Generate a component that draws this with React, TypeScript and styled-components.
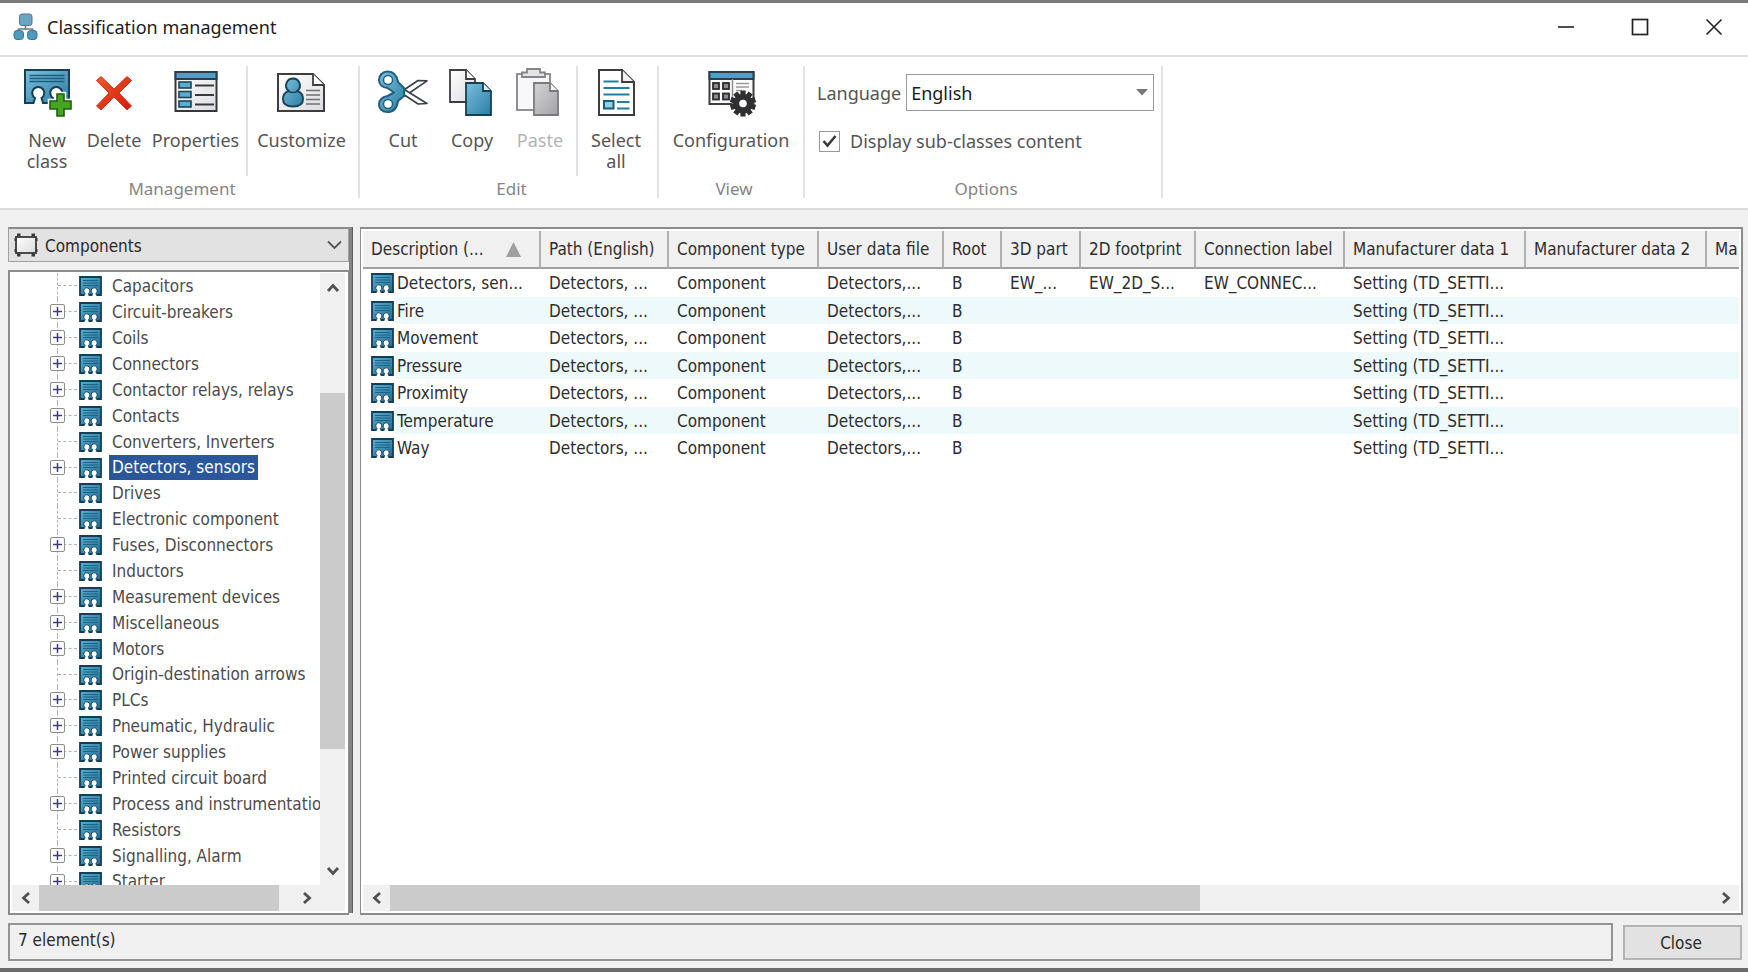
import React from "react";
import styled, { createGlobalStyle } from "styled-components";

const uiFont = `"Noto Sans", "Open Sans", sans-serif`;
const listFont = `"DejaVu Sans Condensed", "Noto Sans", sans-serif`;

const GlobalStyle = createGlobalStyle`
  * { box-sizing: border-box; }
  body { margin: 0; background: #f0f0f0; font-family: ${uiFont}; }
  button, select, input { font: inherit; color: inherit; }
  ul { list-style: none; margin: 0; padding: 0; }
`;

/* ---------- window frame ---------- */

const Window = styled.div`
  display: flex;
  flex-direction: column;
  height: 100vh;
  border-top: 3px solid #7a7a7a;
  border-bottom: 4px solid #6c6c6c;
  background: #f0f0f0;
`;

const TitleBar = styled.header`
  display: flex;
  align-items: center;
  flex: none;
  height: 54px;
  padding: 0 0 5px 13px;
  background: #fff;
  border-bottom: 2px solid #dfdfe1;
`;

const Title = styled.h1`
  flex: 1;
  margin: 0 0 0 9px;
  font-size: 18px;
  line-height: 24px;
  font-weight: 400;
  color: #1c1c1c;
`;

const WindowButtons = styled.div`
  display: flex;
  gap: 6px;
`;

const WindowButton = styled.button`
  display: flex;
  align-items: center;
  justify-content: center;
  width: 68px;
  height: 40px;
  padding: 0;
  border: 0;
  background: none;
`;

/* ---------- ribbon ---------- */

const Ribbon = styled.nav`
  display: flex;
  flex: none;
  height: 153px;
  padding-top: 9px;
  background: #fff;
  border-bottom: 2px solid #dadada;
`;

const Group = styled.section`
  display: flex;
  flex-direction: column;
  height: 132px;
  border-right: 2px solid #e3e1e5;
`;

const GroupBody = styled.div<{ $left: number }>`
  display: flex;
  flex: none;
  height: 110px;
  padding: 0 8px 0 ${(p) => p.$left}px;
`;

const GroupLabel = styled.div`
  flex: none;
  margin-top: 4px;
  padding-left: 6px;
  text-align: center;
  font-size: 17px;
  line-height: 18px;
  color: #858585;
`;

const ToolButton = styled.button<{ $width: number }>`
  display: flex;
  flex-direction: column;
  align-items: center;
  width: ${(p) => p.$width}px;
  padding: 0;
  border: 0;
  background: none;
  font-size: 18px;
  line-height: 21px;
  color: #555;
  &:disabled { color: #b4b4b4; }
  svg { flex: none; margin-bottom: 12px; }
`;

const Divider = styled.span`
  width: 2px;
  margin: 0 5px;
  background: #e3e1e5;
`;

const Options = styled.div`
  display: flex;
  flex-direction: column;
  flex: none;
  gap: 17px;
  height: 110px;
  padding: 8px 7px 0 12px;
  font-size: 18px;
  color: #555;
`;

const OptionLine = styled.div`
  display: flex;
  align-items: center;
  line-height: 26px;
`;

const SelectBox = styled.div<{ $wide?: boolean }>`
  position: relative;
  flex: ${(p) => (p.$wide ? "none" : "0 0 248px")};
  margin-left: ${(p) => (p.$wide ? 0 : 5)}px;
`;

const LanguageSelect = styled.select`
  display: block;
  appearance: none;
  width: 100%;
  height: 37px;
  padding: 0 30px 0 4px;
  border: 1px solid #9a9a9a;
  border-radius: 0;
  background: #fff;
  color: #1c1c1c;
`;

const ClassSelect = styled.select`
  display: block;
  appearance: none;
  width: 100%;
  height: 35px;
  padding: 1px 30px 0 36px;
  border: 1px solid #a0a0a0;
  border-top: 2px solid #8c8c8c;
  border-radius: 0;
  background: #e2e2e2;
  font-family: ${listFont};
  font-size: 17px;
  color: #2a2a2a;
`;

const Overlay = styled.span<{ $side: "left" | "right"; $inset: number }>`
  position: absolute;
  top: 0;
  bottom: 0;
  ${(p) => p.$side}: ${(p) => p.$inset}px;
  display: flex;
  align-items: center;
  pointer-events: none;
`;

const CheckLabel = styled.label`
  margin-left: 10px;
`;

const CheckFrame = styled.span`
  position: relative;
  display: flex;
  margin-left: 2px;
`;

const Checkbox = styled.input`
  appearance: none;
  width: 21px;
  height: 21px;
  margin: 0;
  border: 1px solid #9a9a9a;
  background: #fff;
  & + span { visibility: hidden; }
  &:checked + span { visibility: visible; }
`;

/* ---------- work area ---------- */

const Work = styled.main`
  display: flex;
  flex: 1;
  min-height: 0;
  padding: 17px 5px 8px 8px;
  font-family: ${listFont};
  font-size: 17px;
`;

const Side = styled.aside`
  display: flex;
  flex-direction: column;
  gap: 8px;
  flex: 0 0 341px;
  min-width: 0;
`;

const Splitter = styled.div`
  flex: 0 0 4px;
  margin: 0 7px 2px 0;
  background: #848484;
  border-right: 1px solid #5f5f5f;
`;

const TreePanel = styled.div`
  display: grid;
  grid-template-columns: minmax(0, 1fr) 25px;
  grid-template-rows: minmax(0, 1fr) 26px;
  flex: 1;
  min-height: 0;
  padding: 1px 3px 2px 2px;
  background: #fff;
  border: 2px solid #8c8c8c;
  border-width: 2px 1px 2px 2px;
`;

const Tree = styled.ul`
  overflow: hidden;
  min-height: 0;
  color: #4c4c4c;
`;

const TreeItem = styled.li`
  display: flex;
  align-items: center;
  height: 26px;
  white-space: nowrap;
  &:nth-child(8n) { height: 25px; }
`;

const Branch = styled.span`
  position: relative;
  flex: none;
  align-self: stretch;
  width: 22px;
  margin-left: 45px;
  border-left: 1px dashed #b4b4b4;
  &::after {
    content: "";
    position: absolute;
    left: 0;
    right: 2px;
    top: 12px;
    border-top: 1px dashed #b4b4b4;
  }
`;

const Expander = styled.button`
  position: absolute;
  z-index: 1;
  left: -8px;
  top: 5px;
  display: flex;
  align-items: center;
  justify-content: center;
  width: 15px;
  height: 15px;
  padding: 0;
  border: 1px solid #8e8e8e;
  border-radius: 2px;
  background: #fff;
`;

const TreeLabel = styled.span<{ $selected?: boolean }>`
  margin-left: 7px;
  padding: 0 3px;
  line-height: 25px;
  color: ${(p) => (p.$selected ? "#fff" : "inherit")};
  background: ${(p) => (p.$selected ? "#2a569b" : "none")};
`;

const VBar = styled.div`
  display: flex;
  flex-direction: column;
  background: #f0f0f0;
`;

const VTrack = styled.div`
  display: grid;
  flex: 1;
  grid-template-rows: 91fr 356fr 107fr;
`;

const HBar = styled.div`
  display: flex;
  flex: none;
  height: 26px;
  background: #f0f0f0;
`;

const HTrack = styled.div<{ $cols: string }>`
  display: grid;
  flex: 1;
  grid-template-columns: ${(p) => p.$cols};
`;

const Thumb = styled.div`
  background: #cbcbcb;
`;

const ArrowButton = styled.button<{ $vertical?: boolean }>`
  display: flex;
  align-items: center;
  justify-content: center;
  flex: 0 0 ${(p) => (p.$vertical ? 29 : 27)}px;
  padding: 0;
  border: 0;
  background: none;
`;

const Corner = styled.div`
  background: #f0f0f0;
`;

/* ---------- table ---------- */

const ListPanel = styled.section`
  display: flex;
  flex-direction: column;
  flex: 1;
  min-width: 0;
  padding: 2px;
  background: #fff;
  border: 2px solid #8c8c8c;
  border-width: 2px 2px 2px 1px;
`;

const TableClip = styled.div`
  flex: 1;
  min-height: 0;
  overflow: hidden;
`;

const Table = styled.table`
  table-layout: fixed;
  width: 1500px;
  border-collapse: separate;
  border-spacing: 0;
  color: #2e2e2e;
`;

const Th = styled.th`
  height: 38px;
  padding: 0 8px;
  border-right: 2px solid #b0b0b0;
  border-bottom: 2px solid #a0a0a0;
  background: #f0f0f0;
  font-weight: 400;
  text-align: left;
  white-space: nowrap;
`;

const Sorted = styled.span`
  display: flex;
  align-items: center;
  justify-content: space-between;
  padding-right: 10px;
`;

const Row = styled.tr`
  height: 27px;
  &:nth-child(odd) { height: 28px; }
  &:nth-child(even) td { background: #edf9fa; }
  &:nth-child(even) td:first-child {
    background: linear-gradient(to right, #fff 32px, #edf9fa 32px);
  }
`;

const Td = styled.td`
  padding: 0 0 0 8px;
  overflow: hidden;
  white-space: nowrap;
`;

const NameCell = styled.span`
  display: flex;
  align-items: center;
  gap: 3px;
`;

/* ---------- footer ---------- */

const Footer = styled.footer`
  display: flex;
  align-items: center;
  flex: none;
  gap: 10px;
  padding: 0 6px 7px 8px;
  font-family: ${listFont};
  font-size: 17px;
  color: #2a2a2a;
`;

const Status = styled.output`
  flex: 1;
  height: 38px;
  padding: 0 8px;
  border: 2px solid #949494;
  line-height: 31px;
`;

const CloseButton = styled.button`
  width: 119px;
  height: 35px;
  padding: 1px 3px 0 0;
  border: 2px solid #b4b4b4;
  background: #e2e2e2;
`;

/* ---------- drawings ---------- */

const GradientSheet = styled.svg`
  position: absolute;
`;

const Gradients = () => (
  <GradientSheet width="0" height="0" aria-hidden="true">
    <defs>
      <linearGradient id="blue" x1="0" y1="0" x2="1" y2="1">
        <stop offset="0" stopColor="#7cc0de" />
        <stop offset="1" stopColor="#2b7da3" />
      </linearGradient>
      <linearGradient id="deep" x1="0" y1="0" x2="1" y2="1">
        <stop offset="0" stopColor="#58b0d4" />
        <stop offset="1" stopColor="#1d6c90" />
      </linearGradient>
      <linearGradient id="paper" x1="0" y1="0" x2="1" y2="1">
        <stop offset="0" stopColor="#ffffff" />
        <stop offset="1" stopColor="#dcdce0" />
      </linearGradient>
      <linearGradient id="grey" x1="0" y1="0" x2="1" y2="1">
        <stop offset="0" stopColor="#d4d3d6" />
        <stop offset="1" stopColor="#a3a2a6" />
      </linearGradient>
      <linearGradient id="red" x1="0" y1="0" x2="1" y2="1">
        <stop offset="0" stopColor="#ee5a2a" />
        <stop offset="1" stopColor="#cf1a0c" />
      </linearGradient>
    </defs>
  </GradientSheet>
);

const ClassGlyph = styled.svg`
  flex: none;
`;

const ClassIcon = () => (
  <ClassGlyph width="23" height="20" viewBox="0 0 23 20" aria-hidden="true">
    <rect x="1" y="1" width="21" height="18" fill="url(#deep)" />
    <path d="M4 4.500h15M4 7h15M4 9.500h15" stroke="#1f6384" strokeWidth="1" />
    <path d="M5.500 19H1V1H22V19H17.500M9.500 19h4" fill="none" stroke="#123f55" strokeWidth="1.800" />
    <path
      d="M5 20L6.200 17.400A3 3 0 1 1 9.400 17.400L10.200 20M12.800 20L13.600 17.400A3 3 0 1 1 16.800 17.400L18 20"
      fill="#fff"
      stroke="#123f55"
      strokeWidth=".9"
    />
  </ClassGlyph>
);

const AppIcon = () => (
  <svg width="25" height="28" viewBox="0 0 25 28" aria-hidden="true">
    <path d="M12.500 12v5M5.500 19v-3h14v3" fill="none" stroke="#6d7c86" strokeWidth="1.600" />
    <rect x="6.500" y="1" width="12.500" height="11.500" rx="2.500" fill="#6aa5c2" stroke="#557688" />
    <rect x="1" y="17.500" width="9.500" height="9" rx="3" fill="#4d9bc0" stroke="#40708a" />
    <rect x="14.500" y="17.500" width="9.500" height="9" rx="3" fill="#4d9bc0" stroke="#40708a" />
  </svg>
);

const NewClassIcon = () => (
  <svg width="50" height="52" viewBox="0 0 50 52" aria-hidden="true">
    <path
      d="M3 4H47V37H39L37.500 32A6 6 0 1 0 31 32L29.500 37H21L19.500 32A6 6 0 1 0 13 32L11.500 37H3Z"
      fill="url(#blue)"
      stroke="#173f52"
      strokeWidth="2"
    />
    <path d="M7.500 9.500h35M7.500 12.500h35M7.500 15.500h35" stroke="#1c5c7c" strokeWidth="1.300" />
    <path d="M35 28h7v7h7v8h-7v7h-7v-7h-7v-8h7z" fill="none" stroke="#fff" strokeWidth="4.500" />
    <path d="M35 28h7v7h7v8h-7v7h-7v-7h-7v-8h7z" fill="#46a51e" stroke="#1f5f12" strokeWidth="1.600" />
  </svg>
);

const DeleteIcon = () => (
  <svg width="50" height="52" viewBox="0 0 50 52" aria-hidden="true">
    <path
      d="M12 10.500l13 12.500 13-12.500 4.500 4L30 27l12.500 13-4.500 4-13-13-13 13-4.500-4L20 27 7.500 14.500z"
      fill="url(#red)"
      stroke="#d8341a"
      strokeWidth="1"
      strokeLinejoin="round"
    />
  </svg>
);

const PropertiesIcon = () => (
  <svg width="50" height="52" viewBox="0 0 50 52" aria-hidden="true">
    <rect x="4.500" y="6" width="41" height="39" fill="url(#paper)" stroke="#33393d" strokeWidth="2" />
    <rect x="4.500" y="6" width="41" height="7" fill="#4d9fc5" stroke="#26404d" strokeWidth="2" />
    <g fill="#5aadd0" stroke="#1c4557" strokeWidth="1.600">
      <rect x="8" y="16" width="12" height="6" />
      <rect x="8" y="25.500" width="12" height="6" />
      <rect x="8" y="35" width="12" height="6" />
    </g>
    <path d="M24 19.500h19M24 29h19M24 38.500h19" stroke="#3a3a3a" strokeWidth="1.800" />
  </svg>
);

const CustomizeIcon = () => (
  <svg width="52" height="52" viewBox="0 0 52 52" aria-hidden="true">
    <path d="M2 8h35l11 11v26H2z" fill="url(#paper)" stroke="#3d3d3f" strokeWidth="2" />
    <path d="M37 8v11h11" fill="#fff" stroke="#3d3d3f" strokeWidth="1.800" />
    <path
      d="M17 12.500a7 7 0 0 1 4.500 12.300c3.500 1.500 5.500 4.500 5.500 8.200 0 5-4 7.500-10 7.500s-10-2.500-10-7.500c0-3.700 2-6.700 5.500-8.200A7 7 0 0 1 17 12.500z"
      fill="url(#blue)"
      stroke="#1c4557"
      strokeWidth="2"
    />
    <path d="M12.500 25.500q4.500 2 9 0" fill="none" stroke="#1c4557" strokeWidth="1.600" />
    <path d="M30 24.500h14M30 29h14M30 33.500h14M30 38h14" stroke="#707074" strokeWidth="1.600" />
  </svg>
);

const CutIcon = () => (
  <svg width="52" height="52" viewBox="0 0 52 52" aria-hidden="true">
    <g stroke="#3a4045" strokeWidth="1.600" strokeLinejoin="round">
      <path d="M26 24.500L41 14.500l9 .3L28 30z" fill="#fff" />
      <path d="M26 28l15 10 9-.5L28 24z" fill="#fff" />
    </g>
    <g fill="url(#blue)" stroke="#20607f" strokeWidth="2" strokeLinejoin="round">
      <path d="M10.500 5.500c6 0 9.500 4 10.500 10.500l6 6v8l-6 5c-1 7-4.500 11-10.500 11-5 0-8.500-3-8.500-7.500C2 34 5.500 31 10.500 30l6.500-3.500L10.500 22C5.500 21.500 2 18.500 2 14c0-4.500 3.500-8.500 8.500-8.500z" />
    </g>
    <circle cx="11" cy="14" r="4.500" fill="#fff" stroke="#20607f" strokeWidth="1.500" />
    <circle cx="11" cy="38" r="4.500" fill="#fff" stroke="#20607f" strokeWidth="1.500" />
  </svg>
);

const CopyIcon = () => (
  <svg width="50" height="52" viewBox="0 0 50 52" aria-hidden="true">
    <path d="M3 4h16l9 9v23H3z" fill="url(#paper)" stroke="#3d3d3f" strokeWidth="1.800" />
    <path d="M19 4v9h9" fill="#fff" stroke="#3d3d3f" strokeWidth="1.800" />
    <path d="M19 17h17l8 8v24H19z" fill="url(#blue)" stroke="#173f52" strokeWidth="1.800" />
    <path d="M36 17v8h8" fill="#d9eef7" stroke="#173f52" strokeWidth="1.800" />
  </svg>
);

const PasteIcon = () => (
  <svg width="50" height="52" viewBox="0 0 50 52" aria-hidden="true">
    <rect x="2" y="8" width="33" height="36" fill="#f8f8fa" stroke="#858588" strokeWidth="1.800" />
    <path d="M7 11V6.500h5V3h13v3.500h5V11z" fill="#e4e3e6" stroke="#858588" strokeWidth="1.800" />
    <path d="M19 17h16l8 8v24H19z" fill="url(#grey)" stroke="#7b7b7e" strokeWidth="1.800" />
    <path d="M35 17v8h8" fill="#f4f4f6" stroke="#7b7b7e" strokeWidth="1.800" />
  </svg>
);

const SelectAllIcon = () => (
  <svg width="50" height="52" viewBox="0 0 50 52" aria-hidden="true">
    <path d="M8 4h23l12 12v33H8z" fill="#fff" stroke="#3d3d3f" strokeWidth="2" />
    <path d="M31 4v12h12" fill="#f1f1f3" stroke="#3d3d3f" strokeWidth="1.800" />
    <path d="M12.500 15.500h15M12.500 22h26M12.500 28.500h26M26 36h12.500M26 42.500h12.500" stroke="#227f9f" strokeWidth="2.200" />
    <rect x="13" y="35" width="9.500" height="7.500" fill="#8cd3ea" stroke="#1d5a75" strokeWidth="2" />
  </svg>
);

const teeth = [0, 36, 72, 108, 144, 180, 216, 252, 288, 324];

const ConfigurationIcon = () => (
  <svg width="52" height="52" viewBox="0 0 52 52" aria-hidden="true">
    <rect x="4.500" y="6" width="44" height="32" fill="#fbfbfc" stroke="#3d3d3f" strokeWidth="2" />
    <rect x="4.500" y="6" width="44" height="7" fill="#4d9fc5" stroke="#26404d" strokeWidth="2" />
    <path d="M27.500 13v25" stroke="#8a8a8c" strokeWidth="1.400" />
    <g fill="#8b8b8f" stroke="#2c2c2e" strokeWidth="1.800">
      <rect x="8" y="17" width="6" height="6" />
      <rect x="18" y="17" width="6" height="6" />
      <rect x="8" y="27.500" width="6" height="6" />
      <rect x="18" y="27.500" width="6" height="6" />
    </g>
    <path d="M31 17.500h13M31 21h13M31 24.500h6" stroke="#9a9a9c" strokeWidth="1.500" />
    <g transform="translate(38 37.500)">
      {teeth.map((a) => (
        <rect key={a} x="-2.600" y="-13" width="5.200" height="6" fill="#2f2f31" transform={`rotate(${a})`} />
      ))}
      <circle r="6.800" fill="#fff" stroke="#2f2f31" strokeWidth="6" />
    </g>
  </svg>
);

const ComponentOutline = () => (
  <svg width="24" height="24" viewBox="0 0 24 24" aria-hidden="true">
    <rect x="2" y="4" width="20" height="16" fill="url(#paper)" stroke="#3a3a3a" strokeWidth="1.800" />
    <path d="M3 2h3.500M17.500 2H21M3 22h3.500M17.500 22H21" stroke="#3a3a3a" strokeWidth="3" />
    <path d="M1.500 5v3M22.500 5v3M1.500 16v3M22.500 16v3" stroke="#3a3a3a" strokeWidth="2" />
  </svg>
);

const rotations = { up: 0, right: 90, down: 180, left: 270 };

const Arrow = ({ to }: { to: keyof typeof rotations }) => (
  <svg width="14" height="14" viewBox="0 0 14 14" aria-hidden="true">
    <path d="M2 10l5-5.500 5 5.500" fill="none" stroke="#505050" strokeWidth="2.800" transform={`rotate(${rotations[to]} 7 7)`} />
  </svg>
);

/* ---------- data ---------- */

const classes: [string, boolean][] = [
  ["Capacitors", false],
  ["Circuit-breakers", true],
  ["Coils", true],
  ["Connectors", true],
  ["Contactor relays, relays", true],
  ["Contacts", true],
  ["Converters, Inverters", false],
  ["Detectors, sensors", true],
  ["Drives", false],
  ["Electronic component", false],
  ["Fuses, Disconnectors", true],
  ["Inductors", false],
  ["Measurement devices", true],
  ["Miscellaneous", true],
  ["Motors", true],
  ["Origin-destination arrows", false],
  ["PLCs", true],
  ["Pneumatic, Hydraulic", true],
  ["Power supplies", true],
  ["Printed circuit board", false],
  ["Process and instrumentation", true],
  ["Resistors", false],
  ["Signalling, Alarm", true],
  ["Starter", true],
];

const columns: [string, number][] = [
  ["Description (...", 178],
  ["Path (English)", 128],
  ["Component type", 150],
  ["User data file", 125],
  ["Root", 58],
  ["3D part", 79],
  ["2D footprint", 115],
  ["Connection label", 149],
  ["Manufacturer data 1", 181],
  ["Manufacturer data 2", 181],
  ["Ma", 156],
];

const shared = ["Detectors, ...", "Component", "Detectors,...", "B"];
const setting = "Setting (TD_SETTI...";
const rows = ["Detectors, sen...", "Fire", "Movement", "Pressure", "Proximity", "Temperature", "Way"].map(
  (name, i) => ({
    name,
    cells: [...shared, ...(i === 0 ? ["EW_...", "EW_2D_S...", "EW_CONNEC..."] : ["", "", ""]), setting, "", ""],
  })
);

/* ---------- page ---------- */

export default function App() {
  return (
    <Window>
      <GlobalStyle />
      <Gradients />
      <TitleBar>
        <AppIcon />
        <Title>Classification management</Title>
        <WindowButtons>
          <WindowButton aria-label="Minimize">
            <svg width="18" height="18" viewBox="0 0 18 18"><path d="M1 9h16" stroke="#222" strokeWidth="1.600" /></svg>
          </WindowButton>
          <WindowButton aria-label="Maximize">
            <svg width="18" height="18" viewBox="0 0 18 18"><rect x="1.500" y="1.500" width="15" height="15" fill="none" stroke="#222" strokeWidth="1.700" /></svg>
          </WindowButton>
          <WindowButton aria-label="Close window">
            <svg width="18" height="18" viewBox="0 0 18 18"><path d="M1.500 1.500l15 15M16.500 1.500l-15 15" stroke="#222" strokeWidth="1.600" /></svg>
          </WindowButton>
        </WindowButtons>
      </TitleBar>

      <Ribbon>
        <Group>
          <GroupBody $left={16}>
            <ToolButton $width={62}><NewClassIcon />New<br />class</ToolButton>
            <ToolButton $width={72}><DeleteIcon />Delete</ToolButton>
            <ToolButton $width={91}><PropertiesIcon />Properties</ToolButton>
            <Divider />
            <ToolButton $width={97}><CustomizeIcon />Customize</ToolButton>
          </GroupBody>
          <GroupLabel>Management</GroupLabel>
        </Group>
        <Group>
          <GroupBody $left={11}>
            <ToolButton $width={64}><CutIcon />Cut</ToolButton>
            <ToolButton $width={74}><CopyIcon />Copy</ToolButton>
            <ToolButton $width={62} disabled><PasteIcon />Paste</ToolButton>
            <Divider />
            <ToolButton $width={66}><SelectAllIcon />Select<br />all</ToolButton>
          </GroupBody>
          <GroupLabel>Edit</GroupLabel>
        </Group>
        <Group>
          <GroupBody $left={8}>
            <ToolButton $width={128}><ConfigurationIcon />Configuration</ToolButton>
          </GroupBody>
          <GroupLabel>View</GroupLabel>
        </Group>
        <Group>
          <Options>
            <OptionLine>
              <label htmlFor="language">Language</label>
              <SelectBox>
                <LanguageSelect id="language" defaultValue="English">
                  <option>English</option>
                </LanguageSelect>
                <Overlay $side="right" $inset={6}>
                  <svg width="12" height="7" viewBox="0 0 12 7"><path d="M0 0h12L6 6.500z" fill="#777" /></svg>
                </Overlay>
              </SelectBox>
            </OptionLine>
            <OptionLine>
              <CheckFrame>
                <Checkbox type="checkbox" id="subclasses" defaultChecked />
                <Overlay $side="left" $inset={3}>
                  <svg width="15" height="14" viewBox="0 0 15 14"><path d="M1.500 7l4 4.500L13.500 2" fill="none" stroke="#3a3a3a" strokeWidth="2.600" /></svg>
                </Overlay>
              </CheckFrame>
              <CheckLabel htmlFor="subclasses">Display sub-classes content</CheckLabel>
            </OptionLine>
          </Options>
          <GroupLabel>Options</GroupLabel>
        </Group>
      </Ribbon>

      <Work>
        <Side>
          <SelectBox $wide>
            <ClassSelect aria-label="Class family" defaultValue="Components">
              <option>Components</option>
            </ClassSelect>
            <Overlay $side="left" $inset={6}><ComponentOutline /></Overlay>
            <Overlay $side="right" $inset={7}>
              <svg width="15" height="10" viewBox="0 0 15 10"><path d="M1 1.500l6.500 6.500L14 1.500" fill="none" stroke="#555" strokeWidth="1.800" /></svg>
            </Overlay>
          </SelectBox>
          <TreePanel>
            <Tree>
              {classes.map(([name, expandable]) => (
                <TreeItem key={name}>
                  <Branch>
                    {expandable && (
                      <Expander aria-label={`Expand ${name}`}>
                        <svg width="9" height="9" viewBox="0 0 9 9"><path d="M0 4.500h9M4.500 0v9" stroke="#3d3f78" strokeWidth="1.500" /></svg>
                      </Expander>
                    )}
                  </Branch>
                  <ClassIcon />
                  <TreeLabel $selected={name === "Detectors, sensors"}>{name}</TreeLabel>
                </TreeItem>
              ))}
            </Tree>
            <VBar>
              <ArrowButton $vertical aria-label="Scroll up"><Arrow to="up" /></ArrowButton>
              <VTrack><span /><Thumb /><span /></VTrack>
              <ArrowButton $vertical aria-label="Scroll down"><Arrow to="down" /></ArrowButton>
            </VBar>
            <HBar>
              <ArrowButton aria-label="Scroll left"><Arrow to="left" /></ArrowButton>
              <HTrack $cols="240fr 14fr"><Thumb /><span /></HTrack>
              <ArrowButton aria-label="Scroll right"><Arrow to="right" /></ArrowButton>
            </HBar>
            <Corner />
          </TreePanel>
        </Side>
        <Splitter />
        <ListPanel>
          <TableClip>
            <Table>
              <colgroup>
                {columns.map(([name, width]) => (
                  <col key={name} width={width} />
                ))}
              </colgroup>
              <thead>
                <tr>
                  {columns.map(([name], i) => (
                    <Th key={name}>
                      {i === 0 ? (
                        <Sorted>
                          {name}
                          <svg width="15" height="15" viewBox="0 0 15 15"><path d="M7.500 0L15 15H0z" fill="#a0a0a0" /></svg>
                        </Sorted>
                      ) : (
                        name
                      )}
                    </Th>
                  ))}
                </tr>
              </thead>
              <tbody>
                {rows.map((row) => (
                  <Row key={row.name}>
                    <Td><NameCell><ClassIcon />{row.name}</NameCell></Td>
                    {row.cells.map((cell, i) => (
                      <Td key={i}>{cell}</Td>
                    ))}
                  </Row>
                ))}
              </tbody>
            </Table>
          </TableClip>
          <HBar>
            <ArrowButton aria-label="Scroll list left"><Arrow to="left" /></ArrowButton>
            <HTrack $cols="809fr 512fr"><Thumb /><span /></HTrack>
            <ArrowButton aria-label="Scroll list right"><Arrow to="right" /></ArrowButton>
          </HBar>
        </ListPanel>
      </Work>

      <Footer>
        <Status>7 element(s)</Status>
        <CloseButton>Close</CloseButton>
      </Footer>
    </Window>
  );
}
